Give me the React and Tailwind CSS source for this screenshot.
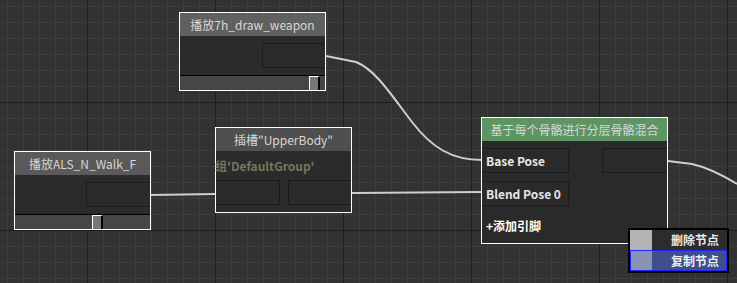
import React from "react";

const W = 737;
const H = 283;

function Grid() {
  const minorX = [];
  for (let x = 7; x < W; x += 16) minorX.push(x);
  const minorY = [];
  for (let y = 6; y < H; y += 16) minorY.push(y);
  const majorX = [87, 215, 343, 471, 599, 727];
  const majorY = [102, 230];
  return (
    <svg className="absolute inset-0" width={W} height={H}>
      {minorX.map((x) => (
        <line key={"mx" + x} x1={x + 0.5} y1={0} x2={x + 0.5} y2={H} stroke="#3d3d3d" strokeWidth="1" />
      ))}
      {minorY.map((y) => (
        <line key={"my" + y} x1={0} y1={y + 0.5} x2={W} y2={y + 0.5} stroke="#3d3d3d" strokeWidth="1" />
      ))}
      {majorX.map((x) => (
        <line key={"Mx" + x} x1={x + 0.5} y1={0} x2={x + 0.5} y2={H} stroke="#1e1e1e" strokeWidth="1" />
      ))}
      {majorY.map((y) => (
        <line key={"My" + y} x1={0} y1={y + 0.5} x2={W} y2={y + 0.5} stroke="#1e1e1e" strokeWidth="1" />
      ))}
    </svg>
  );
}

function Wires() {
  return (
    <svg className="absolute inset-0" width={W} height={H} fill="none">
      <path d="M326 56 L356 62 C376 70 392 96 412 122 C432 148 452 160 482 160" stroke="#cfcfcf" strokeWidth="2" />
      <path d="M151 195 L215 194" stroke="#cfcfcf" strokeWidth="2" />
      <path d="M352 193 L482 192" stroke="#cfcfcf" strokeWidth="2" />
      <path d="M668 161 L692 164 C710 168 724 176 737 184" stroke="#cfcfcf" strokeWidth="2" />
    </svg>
  );
}

function PlayNode({ title, className, boxLeft, handleLeft, titleBg }) {
  return (
    <div className={`absolute flex flex-col border border-white bg-[#2b2b2b] ${className}`}>
      <div className={`h-[23px] flex items-center justify-center text-[12px] text-[#d6d6d6] ${titleBg}`}>{title}</div>
      <div className="h-[39px] pt-[7px] flex">
        <div className={`h-[25px] flex-1 border border-r-0 border-[#1c1c1c] ${boxLeft}`} />
      </div>
      <div className="h-px bg-black" />
      <div className="flex-1 bg-[#464646] flex">
        <div className={`w-[11px] h-full bg-[#777777] border-l border-t border-white border-r-2 border-r-black ${handleLeft}`} />
      </div>
    </div>
  );
}

export default function App() {
  return (
    <div
      className="relative w-[737px] h-[283px] overflow-hidden bg-[#323232]"
      style={{ fontFamily: '"Noto Sans CJK SC", "Noto Sans", sans-serif' }}
    >
      <Grid />
      <Wires />

      <PlayNode
        title="播放7h_draw_weapon"
        className="left-[179px] top-[12px] w-[147px] h-[79px]"
        boxLeft="ml-[82px]"
        handleLeft="ml-[129px]"
        titleBg="bg-[#606060]"
      />

      <PlayNode
        title="播放ALS_N_Walk_F"
        className="left-[14px] top-[151px] w-[137px] h-[79px]"
        boxLeft="ml-[71px]"
        handleLeft="ml-[77px]"
        titleBg="bg-[#5a5a5a]"
      />

      <div className="absolute left-[215px] top-[127px] w-[137px] h-[86px] flex flex-col border border-white bg-[#2b2b2b]">
        <div className="h-[23px] flex items-center justify-center text-[12px] text-[#d6d6d6] bg-[#4f4f4f]">插槽"UpperBody"</div>
        <div className="h-[29px] -ml-px flex items-center text-[12px] font-bold text-[#75755a]">组'DefaultGroup'</div>
        <div className="flex gap-[8px]">
          <div className="w-[64px] h-[25px] border border-l-0 border-[#1c1c1c]" />
          <div className="flex-1 h-[25px] border border-r-0 border-[#1c1c1c]" />
        </div>
      </div>

      <div className="absolute left-[481px] top-[117px] w-[187px] h-[127px] flex flex-col border border-white bg-[#2a2a2a]">
        <div className="h-[23px] flex items-center justify-center text-[12px] text-[#d8d8d8] bg-[#5e9562]">基于每个骨骼进行分层骨骼混合</div>
        <div className="flex flex-col gap-[8px] pt-[7px]">
          <div className="flex justify-between">
            <div className="w-[87px] h-[25px] border border-l-0 border-[#1c1c1c] flex items-center pl-[4px] text-[12px] font-bold text-[#e6e6e6]">Base Pose</div>
            <div className="w-[65px] h-[25px] border border-r-0 border-[#1c1c1c]" />
          </div>
          <div className="w-[87px] h-[25px] border border-l-0 border-[#1c1c1c] flex items-center pl-[4px] text-[12px] font-bold text-[#e6e6e6]">Blend Pose 0</div>
          <div className="h-[24px] flex items-center pl-[4px] text-[12px] font-bold text-white">+添加引脚</div>
        </div>
      </div>

      <div className="absolute left-[628px] top-[228px] w-[101px] h-[45px] border-2 border-black bg-[#2c2c2c] flex flex-col text-[12px] font-bold">
        <div className="h-[20px] flex items-center">
          <div className="w-[22px] h-full bg-[#b3b3b3]" />
          <div className="flex-1 text-right pr-[8px] text-[#e8e8e8]">删除节点</div>
        </div>
        <div className="flex-1 flex items-center border border-[#2323ff] bg-[#3e4f8b]">
          <div className="w-[21px] h-full bg-[#8a93b6]" />
          <div className="flex-1 text-right pr-[7px] text-[#f0f0f0]">复制节点</div>
        </div>
      </div>
    </div>
  );
}
